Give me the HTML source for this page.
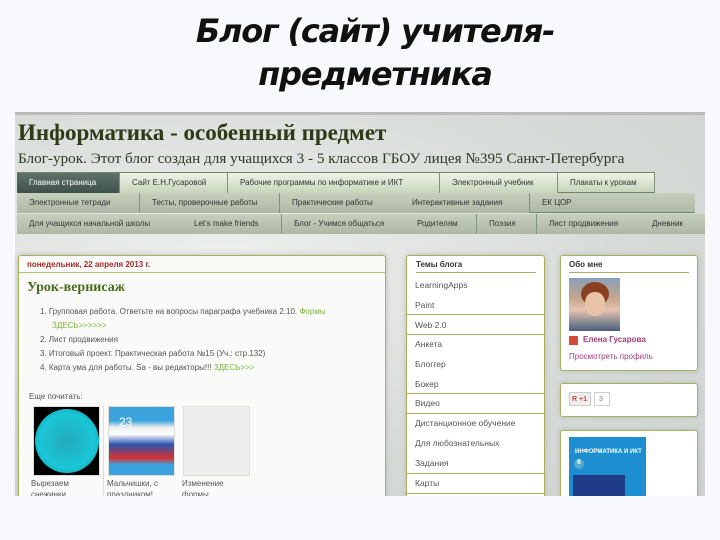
<!DOCTYPE html>
<html><head><meta charset="utf-8"><style>
*{margin:0;padding:0;box-sizing:border-box}
body{width:720px;height:540px;background:#f8f9fc;position:relative;overflow:hidden;font-family:"Liberation Sans",sans-serif}
.a{position:absolute;white-space:nowrap}
h1{position:absolute;left:0;width:750px;text-align:center;font:italic bold 32px "DejaVu Sans","Liberation Sans",sans-serif;color:#111;letter-spacing:-1.2px}
#clip{position:absolute;left:0;top:0;width:720px;height:496px;overflow:hidden}
#blog{position:absolute;left:15px;top:112px;width:690px;height:384px;background:radial-gradient(ellipse at 30% 40%,#eef0ee,#d7dbd8 60%,#cfd3d0);border-top:3px solid #bbb}
.t{position:absolute;font-size:8px;color:#333;height:20px;line-height:20px;padding-left:12px;border-right:1px solid #7f937a;white-space:nowrap;overflow:hidden}
.r1{background:linear-gradient(#eef3e6,#c8d5bc)}
.r2{background:linear-gradient(#c7cfbd,#adb8a3)}
.box{position:absolute;background:#fff;border:1px solid #a8b060;border-radius:3px;box-shadow:0 0 6px #bbb}
.li{position:absolute;left:9px;font-size:8.5px;color:#555;white-space:nowrap}
.sep{position:absolute;left:0;width:138px;border-top:1px solid #a8b060}
</style></head><body>
<h1 style="top:12px">Блог (сайт) учителя-</h1>
<h1 style="top:55px">предметника</h1>
<div id="clip">
<div id="blog"></div>
<div class="a" style="left:18px;top:120px;font:bold 23px 'Liberation Serif',serif;color:#2d3a16">Информатика - особенный предмет</div>
<div class="a" style="left:18px;top:150px;font:15.2px 'Liberation Serif',serif;color:#2d3a26">Блог-урок. Этот блог создан для учащихся 3 - 5 классов ГБОУ лицея №395 Санкт-Петербурга</div>
<div style="position:absolute;left:17px;top:172px;width:638px;height:20px;border-top:1px solid #6f846a"></div>
<div class="t r1" style="left:17px;top:173px;width:103px;background:linear-gradient(#5f7268,#3f524a);color:#fff">Главная страница</div>
<div class="t r1" style="left:120px;top:173px;width:108px">Сайт Е.Н.Гусаровой</div>
<div class="t r1" style="left:228px;top:173px;width:212px">Рабочие программы по информатике и ИКТ</div>
<div class="t r1" style="left:440px;top:173px;width:118px">Электронный учебник</div>
<div class="t r1" style="left:558px;top:173px;width:97px;border-bottom:1px solid #6f846a">Плакаты к урокам</div>
<div class="t r2" style="left:17px;top:193px;width:123px">Электронные тетради</div>
<div class="t r2" style="left:140px;top:193px;width:140px">Тесты, проверочные работы</div>
<div class="t r2" style="left:280px;top:193px;width:120px;border:0">Практические работы</div>
<div class="t r2" style="left:400px;top:193px;width:130px">Интерактивные задания</div>
<div class="t r2" style="left:530px;top:193px;width:165px;border-right:0;border-bottom:1px solid #6f846a">ЕК ЦОР</div>
<div class="t r2" style="left:17px;top:214px;width:165px;border:0">Для учащихся начальной школы</div>
<div class="t r2" style="left:182px;top:214px;width:100px">Let's make friends</div>
<div class="t r2" style="left:282px;top:214px;width:123px;border:0">Блог - Учимся общаться</div>
<div class="t r2" style="left:405px;top:214px;width:72px">Родителям</div>
<div class="t r2" style="left:477px;top:214px;width:60px">Поэзия</div>
<div class="t r2" style="left:537px;top:214px;width:103px;border:0">Лист продвижения</div>
<div class="t r2" style="left:640px;top:214px;width:65px;border:0">Дневник</div>

<div class="box" style="left:18px;top:255px;width:368px;height:260px;background:#fafbf8"></div>
<div style="position:absolute;left:19px;top:272px;width:366px;border-top:1px solid #b5c070"></div>
<div class="a" style="left:27px;top:260px;font:bold 8px 'Liberation Sans',sans-serif;color:#a02a2a">понедельник, 22 апреля 2013 г.</div>
<div class="a" style="left:27px;top:280px;font:bold 14px 'Liberation Serif',serif;color:#4c6a1e">Урок-вернисаж</div>
<div class="a" style="left:40px;top:305px;font-size:8px;color:#555;line-height:14px;white-space:normal;width:340px">
1. Групповая работа. Ответьте на вопросы параграфа учебника 2.10. <span style="color:#7bb33a">Формы</span><br><span style="margin-left:12px;color:#7bb33a">ЗДЕСЬ&gt;&gt;&gt;&gt;&gt;&gt;</span><br>2. Лист продвижения<br>3. Итоговый проект. Практическая работа №15 (Уч.: стр.132)<br>4. Карта ума для работы. Sa - вы редакторы!!! <span style="color:#7bb33a">ЗДЕСЬ&gt;&gt;&gt;</span></div>
<div class="a" style="left:29px;top:392px;font-size:8px;color:#555">Еще почитать:</div>
<div class="a" style="left:33px;top:406px;width:67px;height:70px;background:#000;border:1px solid #ddd"><div style="margin:2px auto;width:64px;height:64px;border-radius:50%;background:radial-gradient(#2ab,#1ac6d6 60%,#0e8fa0)"></div></div>
<div class="a" style="left:108px;top:406px;width:67px;height:70px;background:linear-gradient(#3aa3dd 0,#3aa3dd 20%,#eee 30%,#fff 40%,#2a55b0 55%,#d83030 75%,#3aa3dd 85%);border:1px solid #ddd"><span style="position:absolute;left:10px;top:8px;font-size:12px;color:#fff">23</span></div>
<div class="a" style="left:183px;top:406px;width:67px;height:70px;background:#eee;border:1px solid #ddd"></div>
<div style="position:absolute;left:103px;top:405px;height:90px;border-left:1px solid #ddd"></div>
<div class="a" style="left:31px;top:478px;font-size:8px;color:#555;line-height:11px">Вырезаем<br>снежинки</div>
<div class="a" style="left:107px;top:478px;font-size:8px;color:#555;line-height:11px">Мальчишки, с<br>праздником!</div>
<div class="a" style="left:182px;top:478px;font-size:8px;color:#555;line-height:11px">Изменение<br>формы</div>

<div class="box" style="left:406px;top:255px;width:139px;height:260px"></div>
<div class="a" style="left:416px;top:260px;font:bold 8px sans-serif;color:#333">Темы блога</div>
<div style="position:absolute;left:416px;top:272px;width:120px;border-top:1px solid #a8b060"></div>
<div style="position:absolute;left:406px;top:0;width:139px">
<div class="li" style="top:280px">LearningApps</div>
<div class="li" style="top:300px">Paint</div>
<div class="sep" style="top:314px"></div>
<div class="li" style="top:320px">Web 2.0</div>
<div class="sep" style="top:334px"></div>
<div class="li" style="top:339px">Анкета</div>
<div class="li" style="top:359px">Блоггер</div>
<div class="li" style="top:379px">Бокер</div>
<div class="sep" style="top:393px"></div>
<div class="li" style="top:398px">Видео</div>
<div class="sep" style="top:413px"></div>
<div class="li" style="top:418px">Дистанционное обучение</div>
<div class="li" style="top:438px">Для любознательных</div>
<div class="li" style="top:458px">Задания</div>
<div class="sep" style="top:473px"></div>
<div class="li" style="top:478px">Карты</div>
<div class="sep" style="top:493px"></div>
</div>

<div class="box" style="left:560px;top:255px;width:138px;height:116px"></div>
<div class="a" style="left:569px;top:260px;font:bold 8px sans-serif;color:#333">Обо мне</div>
<div style="position:absolute;left:569px;top:272px;width:120px;border-top:1px solid #a8b060"></div>
<div class="a" style="left:569px;top:278px;width:51px;height:53px;background:linear-gradient(#88a0b8,#c9a68c 40%,#e6c4b0 60%,#4a5f80)"><div style="position:absolute;left:12px;top:4px;width:28px;height:24px;border-radius:50%;background:#8a4020"></div><div style="position:absolute;left:16px;top:14px;width:20px;height:24px;border-radius:45%;background:#eac2a8"></div></div>
<div class="a" style="left:569px;top:336px;width:9px;height:9px;background:#d34836"></div>
<div class="a" style="left:583px;top:335px;font:bold 8px sans-serif;color:#a0407a">Елена Гусарова</div>
<div class="a" style="left:569px;top:352px;font-size:8px;color:#a0407a">Просмотреть профиль</div>
<div class="box" style="left:560px;top:383px;width:138px;height:34px"></div>
<div class="a" style="left:569px;top:392px;width:22px;height:14px;background:#eee;border:1px solid #ccc;font:bold 7px sans-serif;color:#d34836;padding:3px 2px">R +1</div>
<div class="a" style="left:594px;top:392px;width:16px;height:14px;border:1px solid #ccc;font-size:7px;color:#777;padding:3px 4px">3</div>
<div class="box" style="left:560px;top:430px;width:138px;height:85px"></div>
<div class="a" style="left:569px;top:437px;width:77px;height:60px;background:#1d8fd0"><div style="position:absolute;left:6px;top:12px;font:bold 6px sans-serif;color:#fff">ИНФОРМАТИКА И ИКТ</div><div style="position:absolute;left:5px;top:22px;width:10px;height:10px;border-radius:50%;background:#5ac;color:#fff;font:bold 7px sans-serif;text-align:center">6</div><div style="position:absolute;left:4px;top:38px;width:52px;height:22px;background:#1e3c88"></div></div>
</div>
</body></html>
